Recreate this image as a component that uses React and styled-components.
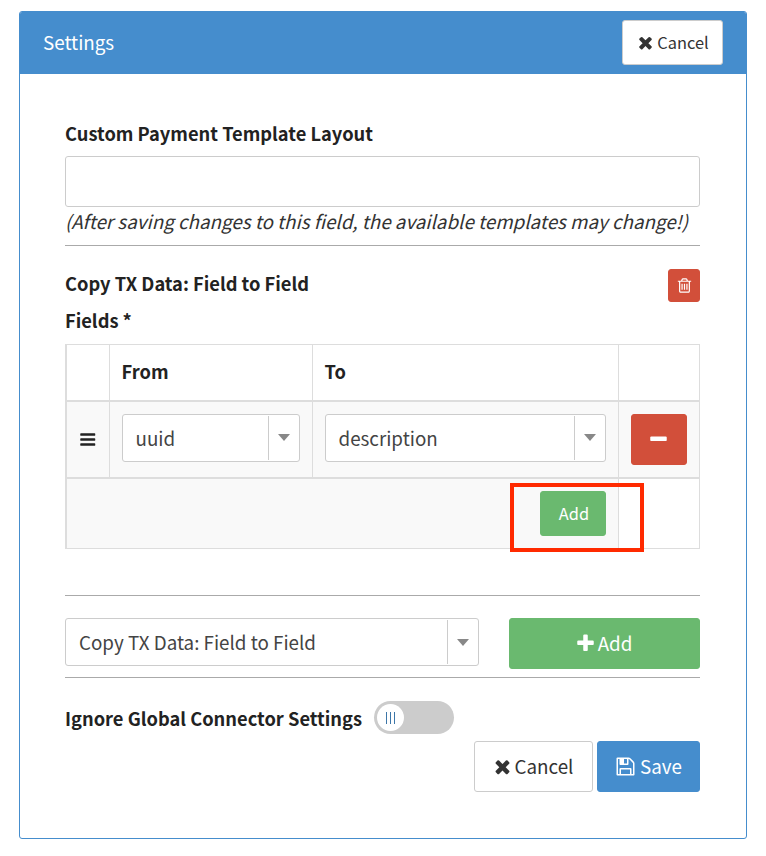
import styled, { createGlobalStyle } from 'styled-components';

const blue = '#458dcd';
const green = '#6ab96f';
const red = '#d24f3a';

// font awesome 4 glyphs, the v5 ones in react-icons are too thin
const glyphs = {
  times: 'M1490 1322q0 40-28 68l-136 136q-28 28-68 28t-68-28l-294-294-294 294q-28 28-68 28t-68-28l-136-136q-28-28-28-68t28-68l294-294-294-294q-28-28-28-68t28-68l136-136q28-28 68-28t68 28l294 294 294-294q28-28 68-28t68 28l136 136q28 28 28 68t-28 68l-294 294 294 294q28 28 28 68z',
  plus: 'M1600 736v192q0 40-28 68t-68 28h-416v416q0 40-28 68t-68 28h-192q-40 0-68-28t-28-68v-416h-416q-40 0-68-28t-28-68v-192q0-40 28-68t68-28h416v-416q0-40 28-68t68-28h192q40 0 68 28t28 68v416h416q40 0 68 28t28 68z',
  minus: 'M1600 736v192q0 40-28 68t-68 28h-1216q-40 0-68-28t-28-68v-192q0-40 28-68t68-28h1216q40 0 68 28t28 68z',
  bars: 'M1664 1344v128q0 26-19 45t-45 19h-1408q-26 0-45-19t-19-45v-128q0-26 19-45t45-19h1408q26 0 45 19t19 45zm0-512v128q0 26-19 45t-45 19h-1408q-26 0-45-19t-19-45v-128q0-26 19-45t45-19h1408q26 0 45 19t19 45zm0-512v128q0 26-19 45t-45 19h-1408q-26 0-45-19t-19-45v-128q0-26 19-45t45-19h1408q26 0 45 19t19 45z',
  save: 'M512 1536h768v-384h-768v384zm896 0h128v-896q0-14-10-38.5t-20-34.5l-281-281q-10-10-34-20t-39-10v416q0 40-28 68t-68 28h-576q-40 0-68-28t-28-68v-416h-128v1280h128v-416q0-40 28-68t68-28h832q40 0 68 28t28 68v416zm-384-928v-320q0-13-9.5-22.5t-22.5-9.5h-192q-13 0-22.5 9.5t-9.5 22.5v320q0 13 9.5 22.5t22.5 9.5h192q13 0 22.5-9.5t9.5-22.5zm640 32v928q0 40-28 68t-68 28h-1344q-40 0-68-28t-28-68v-1344q0-40 28-68t68-28h928q40 0 88 20t76 48l280 280q28 28 48 76t20 88z',
  trash: 'M704 736v576q0 14-9 23t-23 9h-64q-14 0-23-9t-9-23v-576q0-14 9-23t23-9h64q14 0 23 9t9 23zm256 0v576q0 14-9 23t-23 9h-64q-14 0-23-9t-9-23v-576q0-14 9-23t23-9h64q14 0 23 9t9 23zm256 0v576q0 14-9 23t-23 9h-64q-14 0-23-9t-9-23v-576q0-14 9-23t23-9h64q14 0 23 9t9 23zm128 724v-948h-896v948q0 22 7 40.5t14.5 27 10.5 8.5h832q3 0 10.5-8.5t14.5-27 7-40.5zm-672-1076h448l-48-117q-7-9-17-11h-317q-10 2-17 11zm928 32v64q0 14-9 23t-23 9h-96v948q0 83-47 143.5t-113 60.5h-832q-66 0-113-58.5t-47-141.5v-952h-96q-14 0-23-9t-9-23v-64q0-14 9-23t23-9h309l70-167q15-37 54-63t79-26h320q40 0 79 26t54 63l70 167h309q14 0 23 9t9 23z',
};

const Icon = ({ name, size, color }) => (
  <svg width={size} height={size} viewBox="0 0 1792 1792" fill={color || 'currentColor'} style={{ display: 'block' }}>
    <path d={glyphs[name]} />
  </svg>
);

const GlobalStyle = createGlobalStyle`
  * { box-sizing: border-box; }
  html, body { margin: 0; background: #fff; }
  body {
    font-family: "Noto Sans CJK SC", "Source Sans Pro", "Open Sans", sans-serif;
    color: #333;
    font-size: 18.8px;
  }
`;

const Page = styled.div`
  padding: 11px 19px 17px;
`;

const Panel = styled.section`
  width: 728px;
  height: 828px;
  border: 1px solid ${blue};
  border-radius: 3px;
  overflow: hidden;
`;

const Header = styled.header`
  height: 62px;
  margin: 0 -1px;
  background: ${blue};
  color: #fff;
  display: flex;
  align-items: center;
  justify-content: space-between;
  padding: 0 24px 0 24px;
`;

const Title = styled.h1`
  margin: 0 0 2px;
  font-size: 18.8px;
  font-weight: 400;
  line-height: 26px;
`;

const Body = styled.div`
  padding: 45px 46px 0 45px;
`;

const Label = styled.label`
  display: block;
  font-size: 18.3px;
  font-weight: 700;
  line-height: 28px;
  color: #222;
`;

const TextInput = styled.div`
  height: 51px;
  margin-top: 9px;
  border: 1px solid #ccc;
  border-radius: 3px;
  background: #fff;
`;

const Help = styled.p`
  margin: 0;
  font-size: 18.8px;
  font-style: italic;
  line-height: 28px;
  color: #333;
  white-space: nowrap;
`;

const Rule = styled.hr`
  margin: ${(p) => p.$top || 0}px 0 0;
  border: 0;
  border-top: 1px solid #aaa;
`;

const BlockHead = styled.div`
  display: flex;
  justify-content: space-between;
  margin-top: 23px;
  height: 37px;
`;

const Btn = styled.button`
  display: inline-flex;
  align-items: center;
  justify-content: center;
  gap: ${(p) => p.$gap || 4}px;
  padding: ${(p) => p.$pad || 0};
  width: ${(p) => p.$w}px;
  height: ${(p) => p.$h}px;
  border: 1px solid ${(p) => p.$border || p.$bg};
  border-radius: 3px;
  background: ${(p) => p.$bg};
  color: ${(p) => p.$fg || '#fff'};
  font-family: inherit;
  font-size: ${(p) => p.$size || 18.8}px;
  line-height: 1;
`;

const HeaderBtn = styled(Btn)`
  margin-bottom: 1px;
`;

const Grid = styled.div`
  position: relative;
  margin-top: 10px;
`;

const Table = styled.table`
  width: 633px;
  table-layout: fixed;
  border-collapse: collapse;
  border: 1px solid #ddd;
  border-left-width: 2px;
`;

const Th = styled.th`
  height: 56px;
  padding: 0 12px 2px;
  border: 1px solid #ddd;
  border-bottom: 2px solid #ddd;
  text-align: left;
  font-size: 18.3px;
  font-weight: 700;
  color: #222;
`;

const Td = styled.td`
  height: 77px;
  padding: 0 12px;
  border: 1px solid #ddd;
  border-bottom: 2px solid #ddd;
  background: ${(p) => (p.$plain ? '#fff' : '#f9f9f9')};
  text-align: ${(p) => p.$align || 'left'};
`;

const FootTd = styled(Td)`
  height: 71px;
  border-bottom: 1px solid #ddd;
`;

const BarsWrap = styled.div`
  display: flex;
  justify-content: center;
`;

const SelectBox = styled.div`
  display: flex;
  align-items: center;
  height: 48px;
  width: ${(p) => (p.$w ? p.$w + 'px' : '100%')};
  border: 1px solid #ccc;
  border-radius: 3px;
  background: #fff;
  color: #444;
  font-size: 18.8px;
`;

const CellSelect = styled(SelectBox)`
  margin-bottom: 3px;
`;

const SelectText = styled.span`
  flex: 1;
  padding: 0 0 1px 13px;
  white-space: nowrap;
`;

const SelectArrow = styled.span`
  width: 31px;
  height: 44px;
  border-left: 1px solid #ccc;
  display: flex;
  align-items: center;
  justify-content: center;
  &::after {
    content: '';
    border: 6.5px solid transparent;
    border-top: 7px solid #888;
    border-bottom: 0;
  }
`;

const Highlight = styled.div`
  position: absolute;
  left: 445px;
  top: 139px;
  width: 134px;
  height: 69px;
  border: 4px solid #ff2a00;
  pointer-events: none;
`;

const PickRow = styled.div`
  display: flex;
  justify-content: space-between;
  align-items: flex-start;
  margin-top: 22px;
`;

const ToggleRow = styled.div`
  display: flex;
  align-items: center;
  gap: 12px;
  margin-top: 23px;
`;

const Toggle = styled.div`
  width: 80px;
  height: 33px;
  border-radius: 17px;
  background: #ccc;
  padding: 3px;
`;

const Knob = styled.div`
  width: 27px;
  height: 27px;
  border-radius: 50%;
  background: #fff;
  display: flex;
  align-items: center;
  justify-content: center;
  gap: 2.7px;
`;

const KnobLine = styled.i`
  width: 1px;
  height: 12px;
  background: #3c76a8;
`;

const Actions = styled.div`
  display: flex;
  justify-content: flex-end;
  gap: 4px;
  margin-top: 7px;
`;

const App = () => (
  <Page>
    <GlobalStyle />
    <Panel>
      <Header>
        <Title>Settings</Title>
        <HeaderBtn $w={101} $h={45} $bg="#fff" $fg="#333" $border="#ccc" $size={16.4} $gap={2}>
          <Icon name="times" size={19} />
          Cancel
        </HeaderBtn>
      </Header>
      <Body>
        <Label>Custom Payment Template Layout</Label>
        <TextInput />
        <Help>(After saving changes to this field, the available templates may change!)</Help>
        <Rule $top={10} />
        <BlockHead>
          <Label>Copy TX Data: Field to Field</Label>
          <Btn $w={32} $h={33} $bg={red}>
            <Icon name="trash" size={17} />
          </Btn>
        </BlockHead>
        <Label>Fields *</Label>
        <Grid>
          <Table>
            <colgroup>
              <col style={{ width: 43 }} />
              <col style={{ width: 203 }} />
              <col style={{ width: 306 }} />
              <col style={{ width: 81 }} />
            </colgroup>
            <thead>
              <tr>
                <Th />
                <Th>From</Th>
                <Th>To</Th>
                <Th />
              </tr>
            </thead>
            <tbody>
              <tr>
                <Td>
                  <BarsWrap>
                    <Icon name="bars" size={21} color="#222" />
                  </BarsWrap>
                </Td>
                <Td>
                  <CellSelect>
                    <SelectText>uuid</SelectText>
                    <SelectArrow />
                  </CellSelect>
                </Td>
                <Td>
                  <CellSelect>
                    <SelectText>description</SelectText>
                    <SelectArrow />
                  </CellSelect>
                </Td>
                <Td $align="center">
                  <Btn $w={56} $h={51} $bg={red}>
                    <Icon name="minus" size={21} />
                  </Btn>
                </Td>
              </tr>
              <tr>
                <FootTd colSpan={3} $align="right">
                  <Btn $w={66} $h={45} $bg={green} $size={16.4} $pad="0 0 0 3px">
                    Add
                  </Btn>
                </FootTd>
                <FootTd $plain />
              </tr>
            </tbody>
          </Table>
          <Highlight />
        </Grid>
        <Rule $top={46} />
        <PickRow>
          <SelectBox $w={414}>
            <SelectText>Copy TX Data: Field to Field</SelectText>
            <SelectArrow />
          </SelectBox>
          <Btn $w={191} $h={51} $bg={green} $gap={2} $pad="0 2px 0 0">
            <Icon name="plus" size={21} />
            Add
          </Btn>
        </PickRow>
        <Rule $top={8} />
        <ToggleRow>
          <Label>Ignore Global Connector Settings</Label>
          <Toggle>
            <Knob>
              <KnobLine />
              <KnobLine />
              <KnobLine />
            </Knob>
          </Toggle>
        </ToggleRow>
        <Actions>
          <Btn $w={119} $h={51} $bg="#fff" $fg="#333" $border="#ccc" $gap={2} $pad="0 2px 0 0">
            <Icon name="times" size={21} />
            Cancel
          </Btn>
          <Btn $w={103} $h={51} $bg={blue}>
            <Icon name="save" size={21} />
            Save
          </Btn>
        </Actions>
      </Body>
    </Panel>
  </Page>
);

export default App;
